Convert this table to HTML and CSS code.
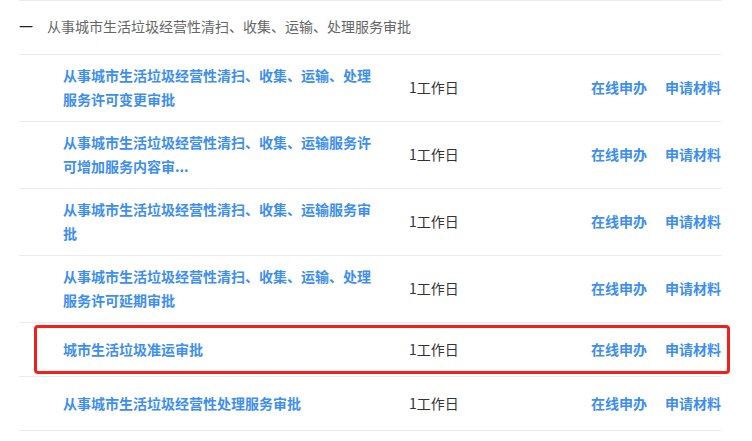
FILE: index.html
```html
<!DOCTYPE html>
<html lang="zh-CN">
<head>
    <meta charset="UTF-8">
    <meta name="viewport" content="width=device-width, initial-scale=1.0">
    <title>从事城市生活垃圾经营性清扫、收集、运输、处理服务审批</title>
    <link rel="stylesheet" href="styles.css">
</head>
<body>
    <div class="group">
        <div class="group-head">
            <span class="toggle">一</span>
            <span class="group-title">从事城市生活垃圾经营性清扫、收集、运输、处理服务审批</span>
        </div>
        <div class="item">
            <a class="item-name" href="#">从事城市生活垃圾经营性清扫、收集、运输、处理服务许可变更审批</a>
            <span class="item-time">1工作日</span>
            <div class="item-actions"><a href="#">在线申办</a><a href="#">申请材料</a></div>
        </div>
        <div class="item">
            <a class="item-name" href="#">从事城市生活垃圾经营性清扫、收集、运输服务许可增加服务内容审...</a>
            <span class="item-time">1工作日</span>
            <div class="item-actions"><a href="#">在线申办</a><a href="#">申请材料</a></div>
        </div>
        <div class="item">
            <a class="item-name" href="#">从事城市生活垃圾经营性清扫、收集、运输服务审批</a>
            <span class="item-time">1工作日</span>
            <div class="item-actions"><a href="#">在线申办</a><a href="#">申请材料</a></div>
        </div>
        <div class="item">
            <a class="item-name" href="#">从事城市生活垃圾经营性清扫、收集、运输、处理服务许可延期审批</a>
            <span class="item-time">1工作日</span>
            <div class="item-actions"><a href="#">在线申办</a><a href="#">申请材料</a></div>
        </div>
        <div class="item marked">
            <a class="item-name" href="#">城市生活垃圾准运审批</a>
            <span class="item-time">1工作日</span>
            <div class="item-actions"><a href="#">在线申办</a><a href="#">申请材料</a></div>
        </div>
        <div class="item">
            <a class="item-name" href="#">从事城市生活垃圾经营性处理服务审批</a>
            <span class="item-time">1工作日</span>
            <div class="item-actions"><a href="#">在线申办</a><a href="#">申请材料</a></div>
        </div>
    </div>
</body>
</html>
```

FILE: styles.css
```css
body {
    margin: 0;
    background: #fff;
    font-family: "Noto Sans CJK SC", "Liberation Sans", sans-serif;
    font-size: 14px;
}
a {
    text-decoration: none;
}
.group {
    margin-left: 19px;
    width: 702px;
}
.group-head {
    display: flex;
    align-items: center;
    box-sizing: border-box;
    height: 55px;
    padding-bottom: 3px;
    border-top: 1px solid #ebebeb;
    border-bottom: 1px solid #ebebeb;
}
.toggle {
    width: 28px;
    color: #222;
    font-size: 14px;
}
.group-title {
    color: #666;
    font-size: 14px;
}
.item {
    position: relative;
    display: flex;
    align-items: center;
    box-sizing: border-box;
    min-height: 54px;
    padding: 8px 0 10px 44px;
    border-bottom: 1px solid #ebebeb;
    line-height: 24px;
}
.item-name {
    width: 312px;
    margin-right: 34px;
    color: #3d8ef0;
    font-weight: bold;
}
.item-time {
    color: #333;
}
.item-actions {
    margin-left: auto;
    display: flex;
    gap: 18px;
}
.item-actions a {
    color: #3d8ef0;
    font-weight: bold;
}
/* красная рамка-выделение */
.marked::after {
    content: "";
    position: absolute;
    left: 15px;
    right: -9px;
    top: 2px;
    bottom: 2px;
    border: 3px solid #f2201a;
    border-radius: 4px;
}
```
